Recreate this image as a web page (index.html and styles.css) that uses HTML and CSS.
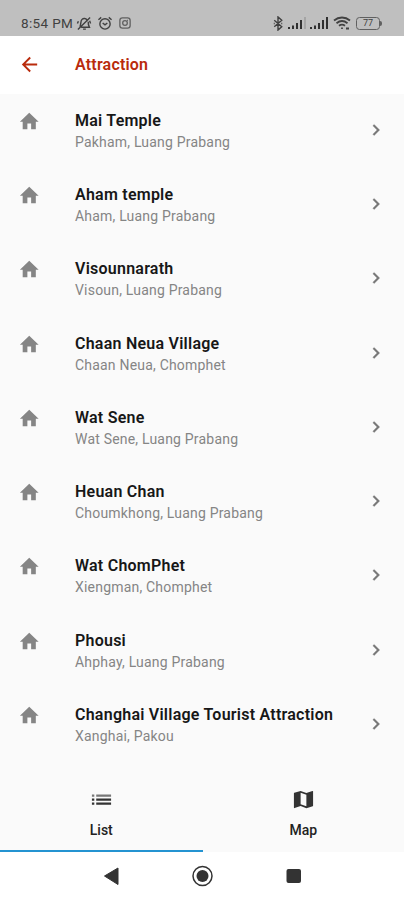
FILE: index.html
```html
<!DOCTYPE html>
<html lang="en">
<head>
<meta charset="utf-8">
<title>Attraction</title>
<link rel="stylesheet" href="styles.css">
</head>
<body>
<svg width="0" height="0" class="defs">
  <symbol id="home" viewBox="0 0 24 24"><path d="M10 20.500v-6h4v6h5v-8h3L12 3 2 12.500h3v8z"/></symbol>
  <symbol id="chevron" viewBox="0 0 24 24"><path d="M10 6 8.590 7.410 13.170 12l-4.580 4.590L10 18l6-6z"/></symbol>
</svg>
<div class="status">
  <span class="time">8:54 PM</span>
  <svg class="bell" viewBox="0 0 16 16"><path d="M3.500 11.500C5 10 4 5 6 3.500c1.500-1.300 4-1 5 .5M12.500 6c-.2 2.500.2 4 1.300 6H5M7 14h3M14.500 1.500l-13 13M2 5.500 1 8M14 5l1 3"/></svg>
  <svg class="alarm" viewBox="0 0 16 16"><circle cx="8" cy="8.500" r="5.500"/><path d="m5.500 7.500 2.500 2 2.500-2M1 4l3-2.500M15 4l-3-2.500"/></svg>
  <svg class="insta" viewBox="0 0 14 14"><rect x="1" y="1" width="12" height="12" rx="3"/><circle cx="7" cy="7" r="2.700"/><path d="M9.500 4h1"/></svg>
  <span class="spacer"></span>
  <svg class="bt" viewBox="0 0 10 16"><path d="m1 4.500 8 7L5 15V1l4 3.500-8 7M.5 8h1M8.500 8h1"/></svg>
  <svg class="signal" viewBox="0 0 18 12"><path d="M0 10h2v2H0zM4 8.500h2V12H4zM8 6h2v6H8zM12 3h2v9h-2z"/><path class="faint" d="M16 0h2v12h-2z"/></svg>
  <svg class="signal second" viewBox="0 0 18 12"><path d="M0 10h2v2H0zM4 8.500h2V12H4zM8 6h2v6H8zM12 3h2v9h-2zM16 0h2v12h-2z"/></svg>
  <svg class="wifi" viewBox="0 0 18 14"><path d="M1 4.500c4.800-4 11.200-4 16 0M3.500 7.200c3.500-2.800 7.500-2.800 11 0M6 9.800c2-1.600 4-1.600 6 0M9 11.500v1.500M13 12.500h3"/></svg>
  <span class="battery">77</span><span class="nub"></span>
</div>
<header class="appbar">
  <svg class="back" viewBox="0 0 24 24"><path d="M20 11H7.830l5.590-5.590L12 4l-8 8 8 8 1.410-1.410L7.830 13H20z"/></svg>
  <h1>Attraction</h1>
</header>
<main class="list">
  <div class="row"><svg class="home"><use href="#home"/></svg><div class="text"><div class="name">Mai Temple</div><div class="place">Pakham, Luang Prabang</div></div><svg class="chev"><use href="#chevron"/></svg></div>
  <div class="row"><svg class="home"><use href="#home"/></svg><div class="text"><div class="name">Aham temple</div><div class="place">Aham, Luang Prabang</div></div><svg class="chev"><use href="#chevron"/></svg></div>
  <div class="row"><svg class="home"><use href="#home"/></svg><div class="text"><div class="name">Visounnarath</div><div class="place">Visoun, Luang Prabang</div></div><svg class="chev"><use href="#chevron"/></svg></div>
  <div class="row"><svg class="home"><use href="#home"/></svg><div class="text"><div class="name">Chaan Neua Village</div><div class="place">Chaan Neua, Chomphet</div></div><svg class="chev"><use href="#chevron"/></svg></div>
  <div class="row"><svg class="home"><use href="#home"/></svg><div class="text"><div class="name">Wat Sene</div><div class="place">Wat Sene, Luang Prabang</div></div><svg class="chev"><use href="#chevron"/></svg></div>
  <div class="row"><svg class="home"><use href="#home"/></svg><div class="text"><div class="name">Heuan Chan</div><div class="place">Choumkhong, Luang Prabang</div></div><svg class="chev"><use href="#chevron"/></svg></div>
  <div class="row"><svg class="home"><use href="#home"/></svg><div class="text"><div class="name">Wat ChomPhet</div><div class="place">Xiengman, Chomphet</div></div><svg class="chev"><use href="#chevron"/></svg></div>
  <div class="row"><svg class="home"><use href="#home"/></svg><div class="text"><div class="name">Phousi</div><div class="place">Ahphay, Luang Prabang</div></div><svg class="chev"><use href="#chevron"/></svg></div>
  <div class="row"><svg class="home"><use href="#home"/></svg><div class="text"><div class="name">Changhai Village Tourist Attraction</div><div class="place">Xanghai, Pakou</div></div><svg class="chev"><use href="#chevron"/></svg></div>
</main>
<div class="tabs">
  <div class="tab active"><svg viewBox="0 0 24 24"><path d="M2 17.500h2.500v-2.300H2zm0-4.200h2.500V11H2zm4.500 4.200H22v-2.300H6.500zm0-4.200H22V11H6.500z"/><path class="soft" d="M2 6.700V9h2.500V6.700zm4.500 0V9H22V6.700z"/></svg><span>List</span></div>
  <div class="tab"><svg viewBox="0 0 24 24"><path fill-rule="evenodd" d="m21.500 3-.16.030L15 5.100 9 3 2.360 4.900c-.21.070-.36.250-.36.480V20.500c0 .28.220.5.500.5l.160-.03L9 18.900l6 2.100 6.640-1.900c.21-.07.360-.25.360-.48V3.500c0-.28-.22-.5-.5-.5zM15 19l-6-2.110V5l6 2.110z"/></svg><span>Map</span></div>
</div>
<nav class="nav">
  <svg viewBox="0 0 404 48"><path d="M104.500 24 118 16v16.500z" stroke="#333" stroke-linejoin="round"/><circle cx="202.500" cy="24" r="9.500" fill="none" stroke="#333" stroke-width="1.500"/><circle cx="202.500" cy="24" r="6"/><rect x="286.500" y="17" width="14.500" height="14" rx="2"/></svg>
</nav>
</body>
</html>
```
FILE: styles.css
```css
* { box-sizing: border-box; }
body {
  margin: 0;
  width: 404px;
  height: 900px;
  overflow: hidden;
  display: flex;
  flex-direction: column;
  background: #fafafa;
  font-family: Roboto, "Liberation Sans", sans-serif;
}
svg { display: block; flex: none; }
.defs { position: absolute; }
.status {
  height: 36px;
  flex: none;
  display: flex;
  align-items: center;
  padding: 10px 22px 0 21px;
  background: #bfbfbf;
  color: #414141;
}
.status svg { fill: none; stroke: #414141; stroke-width: 1.5; }
.time { width: 54px; font-size: 13.500px; letter-spacing: .35px; white-space: nowrap; }
.bell { width: 16px; height: 15px; margin-left: 1px; }
.alarm { width: 16px; height: 15px; margin-left: 5px; }
.status .insta { width: 12px; height: 12px; margin-left: 6px; stroke: #606060; }
.spacer { flex: 1; }
.bt { width: 10px; height: 15px; }
.status .signal { width: 18px; height: 12px; margin-left: 5px; fill: #303030; stroke: none; }
.status .second { margin-left: 4px; }
.status .signal .faint { fill: #a5a5a5; }
.status .wifi { width: 18px; height: 14px; margin-left: 5px; stroke-width: 1.8; }
.battery {
  width: 24px;
  height: 13px;
  margin-left: 5px;
  border: 1.500px solid #606060;
  border-radius: 3.500px;
  font-size: 9px;
  line-height: 11px;
  text-align: center;
}
.nub { width: 2px; height: 5px; background: #606060; border-radius: 0 2px 2px 0; }
.appbar {
  height: 58px;
  flex: none;
  display: flex;
  align-items: center;
  padding: 0 0 1px 18px;
  background: #fff;
  color: #b92b0c;
}
.back { width: 23px; height: 23px; fill: #b92b0c; }
h1 { margin: 0 0 0 34px; font-size: 16px; font-weight: 600; letter-spacing: .2px; }
.list { height: 674px; flex: none; }
.row { height: 74.250px; display: flex; padding: 15.900px 17px 0 18px; }
.home { width: 22.500px; height: 22.500px; fill: #858585; }
.text { flex: 1; padding-left: 34.500px; white-space: nowrap; }
.name { font-size: 16px; line-height: 22px; font-weight: 600; color: #171717; letter-spacing: .24px; }
.place { font-size: 14px; line-height: 20px; color: #858585; letter-spacing: .2px; }
.chev { width: 22px; height: 22px; margin-top: 9px; fill: #777; stroke: #777; stroke-width: .4; }
.tabs { height: 84px; flex: none; display: flex; }
.tab {
  width: 202px;
  display: flex;
  flex-direction: column;
  align-items: center;
  padding-top: 20px;
  font-size: 14px;
  font-weight: 500;
  line-height: 20px;
  color: #222;
}
.active { width: 203px; border-bottom: 2.500px solid #2493d1; }
.tab svg { width: 23px; height: 23px; fill: #333; margin-bottom: 9px; }
.tab .soft { fill: #777; }
.nav { height: 48px; background: #fff; }
.nav svg { width: 404px; height: 48px; fill: #333; }
```
